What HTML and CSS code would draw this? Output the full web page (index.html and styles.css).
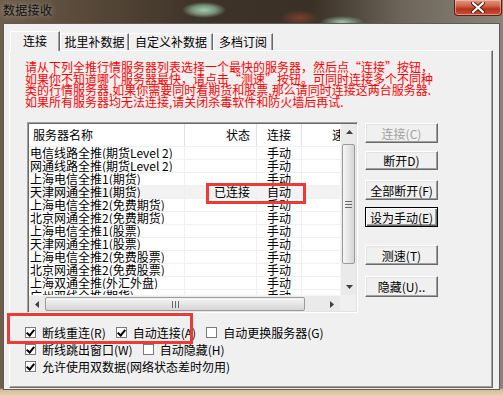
FILE: index.html
```html
<!DOCTYPE html>
<html lang="zh-CN">
<head>
    <meta charset="utf-8">
    <link rel="stylesheet" href="styles.css">
</head>
<body>
<div class="window">
    <div class="titlebar">
        <span class="title">数据接收</span>
        <span class="closebtn">
            <svg width="14" height="11" viewBox="0 0 14 11"><path d="M2 1 L12 10 M12 1 L2 10" stroke="#4a1a10" stroke-width="4" stroke-linecap="round"/><path d="M2 1 L12 10 M12 1 L2 10" stroke="#fff" stroke-width="2.2" stroke-linecap="round"/></svg>
        </span>
    </div>

    <div class="client">
        <div class="tabs">
            <div class="tab active">连接</div>
            <div class="tab t2">批里补数据</div>
            <div class="tab t3">自定义补数据</div>
            <div class="tab t4">多档订阅</div>
        </div>

        <div class="panel">
            <p class="notice">请从下列全推行情服务器列表选择一个最快的服务器，然后点“连接”按钮，<br>如果你不知道哪个服务器最快，请点击“测速”按钮。可同时连接多个不同种<br>类的行情服务器,如果你需要同时看期货和股票,那么请同时连接这两台服务器.<br>如果所有服务器均无法连接,请关闭杀毒软件和防火墙后再试.</p>

            <div class="main">
                <div class="listbox">
                    <div class="list-top">
                        <div class="grid">
                            <div class="grid-head">
                                <span class="c-name">服务器名称</span>
                                <span class="c-state">状态</span>
                                <span class="c-conn">连接</span>
                                <span class="c-speed">速度</span>
                            </div>
                            <div class="grid-row"><span class="c-name">电信线路全推(期货Level 2)</span><span class="c-state"></span><span class="c-conn">手动</span><span class="c-speed"></span></div>
                            <div class="grid-row"><span class="c-name">网通线路全推(期货Level 2)</span><span class="c-state"></span><span class="c-conn">手动</span><span class="c-speed"></span></div>
                            <div class="grid-row"><span class="c-name">上海电信全推1(期货)</span><span class="c-state"></span><span class="c-conn">手动</span><span class="c-speed"></span></div>
                            <div class="grid-row on"><span class="c-name">天津网通全推1(期货)</span><span class="c-state">已连接</span><span class="c-conn">自动</span><span class="c-speed"></span></div>
                            <div class="grid-row"><span class="c-name">上海电信全推2(免费期货)</span><span class="c-state"></span><span class="c-conn">手动</span><span class="c-speed"></span></div>
                            <div class="grid-row"><span class="c-name">北京网通全推2(免费期货)</span><span class="c-state"></span><span class="c-conn">手动</span><span class="c-speed"></span></div>
                            <div class="grid-row"><span class="c-name">上海电信全推1(股票)</span><span class="c-state"></span><span class="c-conn">手动</span><span class="c-speed"></span></div>
                            <div class="grid-row"><span class="c-name">天津网通全推1(股票)</span><span class="c-state"></span><span class="c-conn">手动</span><span class="c-speed"></span></div>
                            <div class="grid-row"><span class="c-name">上海电信全推2(免费股票)</span><span class="c-state"></span><span class="c-conn">手动</span><span class="c-speed"></span></div>
                            <div class="grid-row"><span class="c-name">北京网通全推2(免费股票)</span><span class="c-state"></span><span class="c-conn">手动</span><span class="c-speed"></span></div>
                            <div class="grid-row"><span class="c-name">上海双通全推(外汇外盘)</span><span class="c-state"></span><span class="c-conn">手动</span><span class="c-speed"></span></div>
                            <div class="grid-row"><span class="c-name">广州双线全推(期货)</span><span class="c-state"></span><span class="c-conn">手动</span><span class="c-speed"></span></div>
                        </div>
                        <div class="vscroll">
                            <div class="sb-btn"><svg width="7" height="4" viewBox="0 0 7 4"><path d="M0 4 L3.5 0 L7 4 Z" fill="#404040"/></svg></div>
                            <div class="sb-track"><div class="vthumb"><i></i><i></i><i></i></div></div>
                            <div class="sb-btn"><svg width="7" height="4" viewBox="0 0 7 4"><path d="M0 0 L3.5 4 L7 0 Z" fill="#404040"/></svg></div>
                        </div>
                    </div>
                    <div class="list-bottom">
                        <div class="hscroll">
                            <div class="sb-btn"><svg width="4" height="7" viewBox="0 0 4 7"><path d="M4 0 L0 3.5 L4 7 Z" fill="#404040"/></svg></div>
                            <div class="sb-track"><div class="hthumb"><i></i><i></i><i></i></div></div>
                            <div class="sb-btn"><svg width="4" height="7" viewBox="0 0 4 7"><path d="M0 0 L4 3.5 L0 7 Z" fill="#404040"/></svg></div>
                        </div>
                        <div class="corner"></div>
                    </div>
                </div>

                <div class="buttons">
                    <button class="btn" disabled>连接(C)</button>
                    <button class="btn b2">断开D)</button>
                    <button class="btn b3">全部断开(F)</button>
                    <button class="btn b4 default">设为手动(E)</button>
                    <button class="btn b5">测速(T)</button>
                    <button class="btn b6">隐藏(U)..</button>
                </div>
            </div>

            <div class="options">
                <div class="opt-row">
                    <label class="opt"><span class="box checked"></span>断线重连(R)</label>
                    <label class="opt"><span class="box checked"></span>自动连接(A)</label>
                    <label class="opt"><span class="box"></span>自动更换服务器(G)</label>
                </div>
                <div class="opt-row">
                    <label class="opt"><span class="box checked"></span>断线跳出窗口(W)</label>
                    <label class="opt"><span class="box"></span>自动隐藏(H)</label>
                </div>
                <div class="opt-row">
                    <label class="opt"><span class="box checked"></span>允许使用双数据(网络状态差时勿用)</label>
                </div>
            </div>

            <div class="mark mark-row"></div>
            <div class="mark mark-opts"></div>
        </div>
    </div>
</div>
</body>
</html>
```

FILE: styles.css
```css
* {box-sizing: border-box;}
body {margin: 0; width: 503px; height: 397px; overflow: hidden;
    font-family: "Noto Sans CJK SC", "Liberation Sans", sans-serif; font-size: 12px; color: #000;}

.window {
    width: 503px;
    height: 397px;
    display: flex;
    flex-direction: column;
    padding: 0 3px 7px 3px;
    background:
        linear-gradient(to bottom, rgba(0,0,0,0) 0, rgba(0,0,0,0) 388px, #d9bb9c 390px, #ecd3b8 397px),
        radial-gradient(ellipse 22px 8px at 204px 10px, #9fd0b0 0%, rgba(159,208,176,0.6) 55%, rgba(159,208,176,0) 100%),
        radial-gradient(ellipse 22px 6px at 342px 22px, #9cc8a8 0%, rgba(156,200,168,0) 100%),
        radial-gradient(ellipse 20px 8px at 300px 18px, rgba(150,70,50,0.7) 0%, rgba(150,70,50,0) 100%),
        linear-gradient(to right, #6e5e4c 0%, #5a4b3b 15%, #3e3328 40%, #3a3026 62%, #6d6559 80%, #8b8579 100%);
}

.titlebar {
    height: 23px;
    display: flex;
    justify-content: space-between;
    align-items: flex-start;
    margin-right: -2px;
}
.title {
    padding: 3px 0 0 0;
    font-size: 12px;
    line-height: 14px;
    letter-spacing: 0.3px;
    color: #111;
    text-shadow: 0 0 6px rgba(255,255,255,0.5);
}
.closebtn {
    width: 48px;
    height: 16px;
    display: flex;
    align-items: center;
    justify-content: center;
    border: 1px solid #5a2018;
    border-top: none;
    border-radius: 0 0 4px 4px;
    background: linear-gradient(to bottom, #e09a84 0%, #d0634a 40%, #b8321c 60%, #c8503a 100%);
    box-shadow: inset 0 0 0 1px rgba(255,210,200,0.5);
}

.client {
    flex: 1;
    background: #f0f0f0;
    border: 1px solid #5e5a55;
    padding: 7px 0 0 5px;
}

.tabs {display: flex; align-items: flex-end; height: 19px; position: relative; z-index: 1;}
.tab {
    height: 17px;
    line-height: 16px;
    text-align: center;
    background: #f0f0f0;
    border-top: 1px solid #fff;
    border-left: 1px solid #fff;
    border-right: 1px solid #696969;
    box-shadow: inset -1px 0 #a0a0a0;
}
.tab.active {width: 50px; height: 20px; line-height: 18px; margin-left: 1px; margin-bottom: -1px;}
.tab.t2 {width: 69px;}
.tab.t3 {width: 84px;}
.tab.t4 {width: 60px;}

.panel {
    position: relative;
    width: 484px;
    height: 338px;
    border: 1px solid;
    border-color: #fff #696969 #696969 #fff;
    box-shadow: inset -1px -1px #a0a0a0;
}

.notice {
    margin: 10px 0 0 15px;
    color: #ff0000;
    font-size: 12px;
    line-height: 11.5px;
    white-space: nowrap;
}

.main {display: flex; margin: 15px 0 0 17px; gap: 7px;}

.listbox {
    width: 331px;
    height: 191px;
    border: 1px solid;
    border-color: #a0a0a0 #fff #fff #a0a0a0;
    box-shadow: inset 1px 1px #696969, inset -1px -1px #e3e3e3;
    padding: 1px;
    background: #fff;
    display: flex;
    flex-direction: column;
}
.list-top {display: flex; height: 171px;}
.grid {width: 311px; overflow: hidden; background: #fff;}
.grid-head, .grid-row {
    display: grid;
    grid-template-columns: 156px 72px 45px 60px;
}
.grid-head {height: 23px; line-height: 22px; border-bottom: 1px solid #f0f0f0; color: #1e395b;}
.grid-head span {border-right: 1px solid #dfe3e8; white-space: nowrap; overflow: hidden;}
.grid-head .c-name {padding-left: 4px; color: #000;}
.grid-head .c-state {text-align: right; padding-right: 6px; color: #000;}
.grid-head .c-conn {text-align: center; color: #000;}
.grid-head .c-speed {padding-left: 30px; color: #000; border-right: none;}

.grid-row {height: 13px; line-height: 12px; border-bottom: 1px solid #f0f0f0;}
.grid-row span {border-right: 1px solid #f0f0f0; white-space: nowrap; overflow: hidden;}
.grid-row .c-name {padding-left: 1px;}
.grid-row .c-state {text-align: right; padding-right: 6px;}
.grid-row .c-conn {text-align: center;}
.grid-row.on {background: #f2f2f2;}

.vscroll {width: 16px; display: flex; flex-direction: column; background: #eaeaea; border-left: 1px solid #f4f4f4;}
.hscroll {width: 311px; display: flex; background: #eaeaea; border-top: 1px solid #f4f4f4;}
.sb-btn {flex: none; width: 16px; height: 16px; display: flex; align-items: center; justify-content: center;}
.vscroll .sb-track {flex: 1; padding: 4px 1px 0 1px;}
.hscroll .sb-track {flex: 1; padding: 1px 0 1px 0;}
.vthumb, .hthumb {
    border: 1px solid #9a9a9a;
    border-radius: 2px;
    display: flex;
    align-items: center;
    justify-content: center;
    gap: 1px;
}
.vthumb {height: 120px; flex-direction: column; background: linear-gradient(to right, #f6f6f6, #e2e2e2 60%, #d6d6d6);}
.hthumb {width: 260px; height: 14px; background: linear-gradient(to bottom, #f6f6f6, #e2e2e2 60%, #d6d6d6);}
.vthumb i {display: block; width: 7px; height: 1px; background: #6a6a6a; margin: 0.5px 0;}
.hthumb i {display: block; width: 1px; height: 7px; background: #6a6a6a; margin: 0 0.5px;}
.list-bottom {display: flex; height: 16px;}
.corner {width: 16px; background: #f0f0f0;}

.buttons {display: flex; flex-direction: column; width: 73px; padding-top: 1px;}
.btn {
    width: 73px;
    height: 20px;
    padding: 0;
    font-family: inherit;
    font-size: 12px;
    line-height: 17px;
    color: #000;
    background: #f0f0f0;
    border: 1px solid;
    border-color: #fff #696969 #696969 #fff;
    box-shadow: inset -1px -1px #a0a0a0, inset 1px 1px #e3e3e3;
}
.btn:disabled {color: #a0a0a0;}
.b2 {margin-top: 8px; height: 19px;}
.b3 {margin-top: 10px;}
.b4 {margin-top: 7px;}
.b5 {margin-top: 18px;}
.b6 {margin-top: 11px; height: 21px;}
.btn.default {border: 1px solid #000; box-shadow: inset 1px 1px #fff, inset -1px -1px #696969, inset -2px -2px #a0a0a0;}

.options {margin: 11px 0 0 15px;}
.opt-row {display: flex; height: 17px; align-items: center; gap: 10px;}
.opt {display: flex; align-items: center; gap: 6px; white-space: nowrap; line-height: 17px;}
.box {
    width: 11px;
    height: 11px;
    border: 1px solid #7a7a7a;
    background: #fff;
    flex: none;
    position: relative;
}
.box.checked::after {
    content: "";
    position: absolute;
    left: 2px;
    top: 0px;
    width: 3px;
    height: 6px;
    border-right: 2px solid #000;
    border-bottom: 2px solid #000;
    transform: rotate(40deg);
}

/* red annotation frames on top of the dialog */
.mark {position: absolute; border: 3px solid #ec3b35;}
.mark-row {left: 196px; top: 132px; width: 100px; height: 21px;}
.mark-opts {left: -3px; top: 262px; width: 186px; height: 31px;}
```
